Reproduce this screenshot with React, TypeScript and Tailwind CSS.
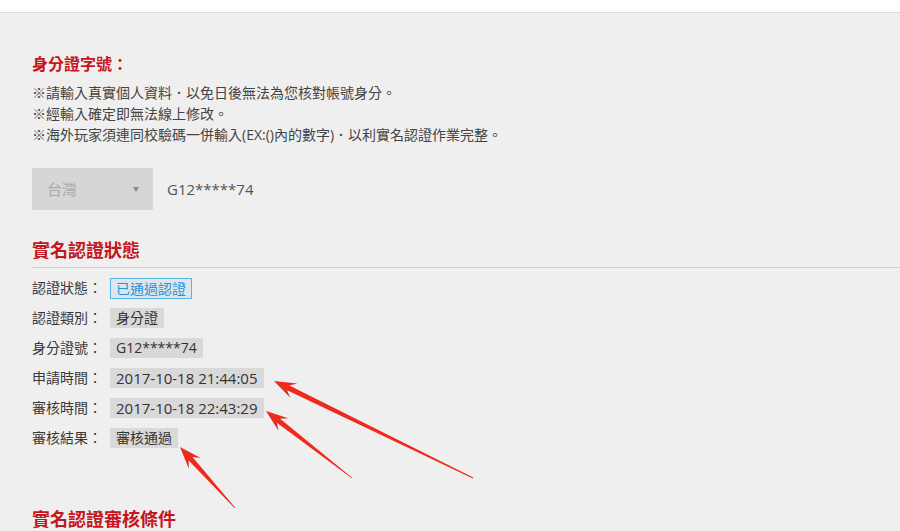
import React from 'react';

const font = { fontFamily: '"Open Sans", "Noto Sans CJK TC", sans-serif' };

type Arrow = { tail: [number, number]; tip: [number, number] };

const arrows: Arrow[] = [
  { tail: [473, 478], tip: [274, 381] },
  { tail: [352, 478], tip: [266, 411] },
  { tail: [235, 508], tip: [180, 447] },
];

function arrowPoints({ tail, tip }: Arrow) {
  const dx = tip[0] - tail[0];
  const dy = tip[1] - tail[1];
  const len = Math.hypot(dx, dy);
  const ux = dx / len;
  const uy = dy / len;
  const nx = -uy;
  const ny = ux;
  const h = 22;
  const w = 8;
  const s = 2.6;
  const bx = tip[0] - ux * h;
  const by = tip[1] - uy * h;
  const jx = tip[0] - ux * h * 0.72;
  const jy = tip[1] - uy * h * 0.72;
  const pts = [
    [tail[0] + nx * 0.4, tail[1] + ny * 0.4],
    [jx + nx * s, jy + ny * s],
    [bx + nx * w, by + ny * w],
    [tip[0], tip[1]],
    [bx - nx * w, by - ny * w],
    [jx - nx * s, jy - ny * s],
    [tail[0] - nx * 0.4, tail[1] - ny * 0.4],
  ];
  return pts.map((p) => `${p[0].toFixed(1)},${p[1].toFixed(1)}`).join(' ');
}

function Row({ label, children }: { label: string; children: React.ReactNode }) {
  return (
    <div className="flex items-center h-[20px]">
      <span className="w-[78px] text-[14px] text-[#383838] leading-[20px]">{label}</span>
      {children}
    </div>
  );
}

function Badge({ children, latin }: { children: React.ReactNode; latin?: boolean }) {
  return (
    <span
      className={`h-[20px] px-[6px] bg-[#d9d9d9] text-[#333] leading-[20px] ${latin ? 'text-[15px]' : 'text-[14px]'}`}
    >
      {children}
    </span>
  );
}

export default function App() {
  return (
    <div className="relative h-[531px] overflow-hidden bg-[#efefef]" style={font}>
      <div className="h-[13px] bg-white border-b border-[#dcdcdc]" />

      <div className="pl-[32px]">
        {/* ID number */}
        <h3 className="mt-[41px] text-[16px] font-bold text-[#c4161c] leading-[21px]">身分證字號：</h3>
        <div className="mt-[7px] text-[14px] text-[#444] leading-[21px]">
          <p>※請輸入真實個人資料．以免日後無法為您核對帳號身分。</p>
          <p>※經輸入確定即無法線上修改。</p>
          <p>※海外玩家須連同校驗碼一併輸入(EX:()內的數字)．以利實名認證作業完整。</p>
        </div>

        <div className="mt-[23px] flex items-center">
          <div className="w-[121px] h-[42px] bg-[#d6d6d6] flex items-center justify-between pl-[15px] pr-[14px]">
            <span className="text-[15px] text-[#aaa]">台灣</span>
            <span className="w-0 h-0 border-l-[3.5px] border-r-[3.5px] border-t-[5px] border-l-transparent border-r-transparent border-t-[#888]" />
          </div>
          <span className="ml-[14px] text-[15px] text-[#555]">G12*****74</span>
        </div>

        {/* status */}
        <h3 className="mt-[28px] pb-[5px] border-b border-[#d2d2d2] text-[18px] font-bold text-[#c4161c] leading-[24px]">
          實名認證狀態
        </h3>

        <div className="mt-[10px] flex flex-col gap-[10px]">
          <Row label="認證狀態：">
            <span className="h-[21px] px-[5px] border border-[#5ab4e4] bg-[#dce6ec] text-[14px] text-[#2b92d4] leading-[19px]">
              已通過認證
            </span>
          </Row>
          <Row label="認證類別：">
            <Badge>身分證</Badge>
          </Row>
          <Row label="身分證號：">
            <Badge>G12*****74</Badge>
          </Row>
          <Row label="申請時間：">
            <Badge latin>2017-10-18 21:44:05</Badge>
          </Row>
          <Row label="審核時間：">
            <Badge latin>2017-10-18 22:43:29</Badge>
          </Row>
          <Row label="審核結果：">
            <Badge>審核通過</Badge>
          </Row>
        </div>

        <h3 className="mt-[62px] text-[18px] font-bold text-[#c4161c] leading-[19px]">實名認證審核條件</h3>
      </div>

      {/* annotation arrows */}
      <svg className="absolute inset-0 pointer-events-none" width="900" height="531" viewBox="0 0 900 531">
        {arrows.map((a, i) => (
          <polygon key={i} points={arrowPoints(a)} fill="#ee2a1f" />
        ))}
      </svg>
    </div>
  );
}
